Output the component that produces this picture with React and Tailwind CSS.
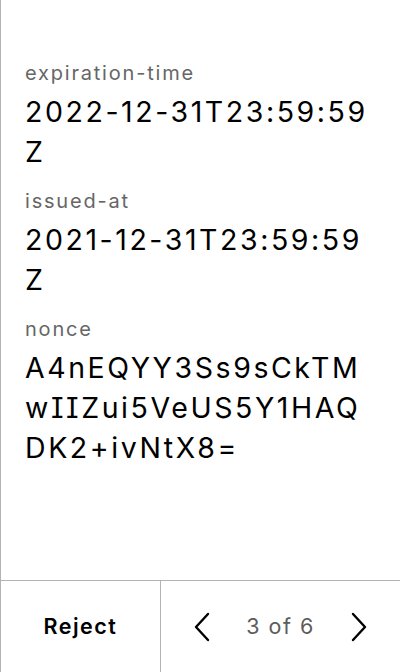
import React from "react";

const fields = [
  { label: "expiration-time", value: "2022-12-31T23:59:59Z" },
  { label: "issued-at", value: "2021-12-31T23:59:59Z" },
  { label: "nonce", value: "A4nEQYY3Ss9sCkTMwIIZui5VeUS5Y1HAQDK2+ivNtX8=" },
];

/* ---------- Chevron ---------- */
function Chevron({ dir }) {
  return (
    <svg width="16" height="30" viewBox="0 0 16 30" fill="none">
      <path
        d={dir === "left" ? "M14 2 L2 15 L14 28" : "M2 2 L14 15 L2 28"}
        stroke="#000"
        strokeWidth="2.4"
        strokeLinecap="round"
        strokeLinejoin="round"
      />
    </svg>
  );
}

export default function App() {
  return (
    <div
      className="h-screen flex flex-col bg-white border-l border-[#b3b3b3] text-black [font-feature-settings:'cv08']"
      style={{ fontFamily: "Inter, 'Noto Sans', sans-serif" }}
    >
      {/* Fields */}
      <div className="flex-1 px-[24px] pt-[59px] overflow-hidden">
        {fields.map((f) => (
          <div key={f.label} className="mb-[15px]">
            <p className="text-[20px] leading-[28px] tracking-[0.09em] text-[#666666]">
              {f.label}
            </p>
            <p className="mt-[5px] text-[28.5px] leading-[40px] tracking-[0.09em] break-all">
              {f.value}
            </p>
          </div>
        ))}
      </div>

      {/* Footer */}
      <div className="h-[92px] flex border-t border-[#b3b3b3]">
        <button className="w-[160px] flex items-center justify-center text-[21.5px] tracking-[0.07em] font-semibold border-r border-[#b3b3b3]">
          Reject
        </button>
        <div className="flex-1 flex items-center justify-between px-[33px]">
          <button className="flex items-center">
            <Chevron dir="left" />
          </button>
          <span className="text-[21.5px] tracking-[0.07em] text-[#5c5c5c]">
            3 of 6
          </span>
          <button className="flex items-center">
            <Chevron dir="right" />
          </button>
        </div>
      </div>
    </div>
  );
}
